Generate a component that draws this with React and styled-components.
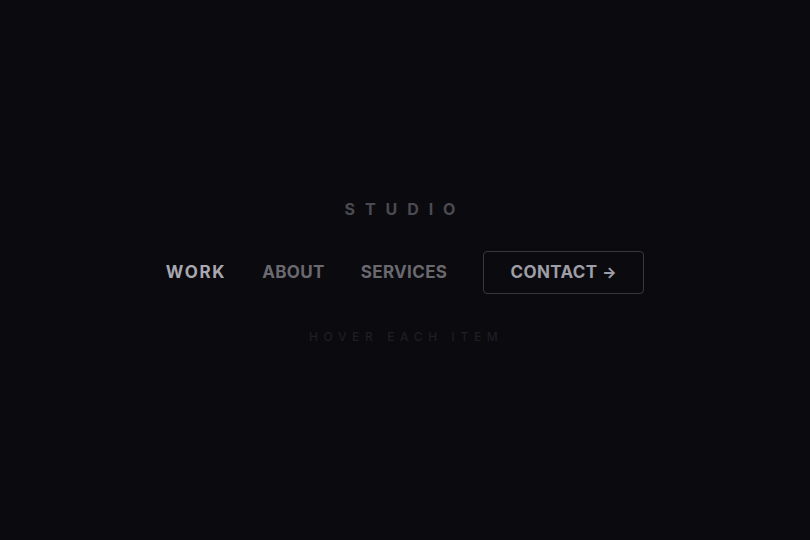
import React from "react";
import styled, { createGlobalStyle } from "styled-components";

const Global = createGlobalStyle`
  html, body { margin: 0; padding: 0; background: #0b0a0f; }
  body { font-family: Inter, "Liberation Sans", sans-serif; }
`;

const Page = styled.div`
  width: 810px;
  height: 540px;
  display: flex;
  flex-direction: column;
  align-items: center;
  justify-content: center;
  background: #0b0a0f;
`;

const Brand = styled.div`
  font-size: 16px;
  font-weight: 700;
  letter-spacing: 0.62em;
  color: #4b4a52;
  margin-bottom: 32px;
  margin-top: 2px;
`;

const Nav = styled.nav`
  display: flex;
  align-items: center;
  gap: 36px;
`;

const Item = styled.a`
  font-size: 17px;
  font-weight: 700;
  letter-spacing: ${p => (p.$active ? "0.1em" : "0.02em")};
  color: ${p => (p.$active ? "#a9a8b0" : "#6a6970")};
  text-decoration: none;
  cursor: pointer;
`;

const Cta = styled.button`
  width: 161px;
  height: 43px;
  background: transparent;
  border: 1px solid #38373f;
  border-radius: 4px;
  font-family: inherit;
  font-size: 17px;
  font-weight: 700;
  letter-spacing: 0.02em;
  color: #9e9ea6;
  display: flex;
  align-items: center;
  justify-content: center;
  gap: 5px;
  cursor: pointer;
`;

const Arrow = styled.span`
  font-size: 15px;
  font-weight: 800;
`;

const Hint = styled.div`
  margin-top: 35px;
  font-size: 12px;
  font-weight: 500;
  letter-spacing: 0.47em;
  margin-right: -0.2em;
  color: #1f1e25;
`;

export default function App() {
  return (
    <>
      <Global />
      <Page>
        <Brand>STUDIO</Brand>
        <Nav>
          <Item $active>WORK</Item>
          <Item>ABOUT</Item>
          <Item>SERVICES</Item>
          <Cta>CONTACT <Arrow>→</Arrow></Cta>
        </Nav>
        <Hint>HOVER EACH ITEM</Hint>
      </Page>
    </>
  );
}
